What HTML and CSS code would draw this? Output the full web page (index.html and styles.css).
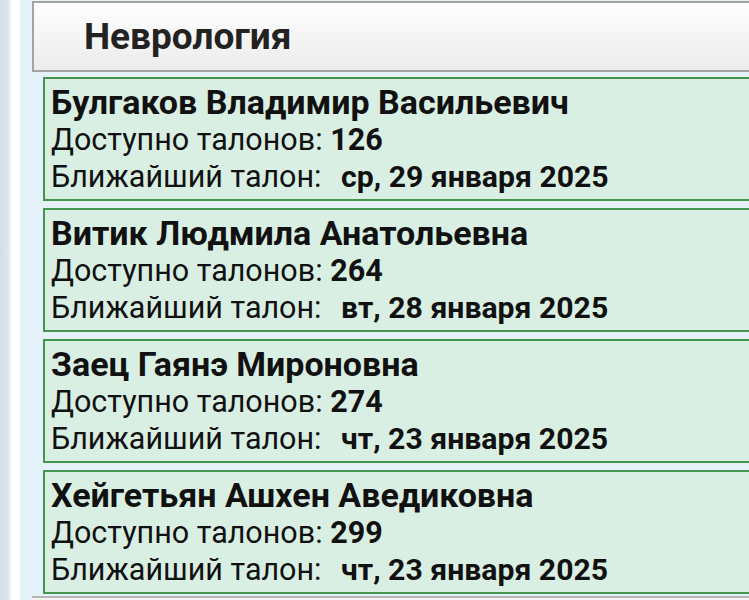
FILE: index.html
```html
<!DOCTYPE html>
<html lang="ru">
<head>
<meta charset="utf-8">
<link rel="stylesheet" href="styles.css">
</head>
<body>
<div class="page">
  <div class="rail"></div>
  <div class="content">
    <div class="header">Неврология</div>
    <div class="list">
      <div class="card">
        <div class="name">Булгаков Владимир Васильевич</div>
        <div class="line">Доступно талонов: <b>126</b></div>
        <div class="line">Ближайший талон: <b class="date">ср, 29 января 2025</b></div>
      </div>
      <div class="card">
        <div class="name">Витик Людмила Анатольевна</div>
        <div class="line">Доступно талонов: <b>264</b></div>
        <div class="line">Ближайший талон: <b class="date">вт, 28 января 2025</b></div>
      </div>
      <div class="card">
        <div class="name">Заец Гаянэ Мироновна</div>
        <div class="line">Доступно талонов: <b>274</b></div>
        <div class="line">Ближайший талон: <b class="date">чт, 23 января 2025</b></div>
      </div>
      <div class="card">
        <div class="name">Хейгетьян Ашхен Аведиковна</div>
        <div class="line">Доступно талонов: <b>299</b></div>
        <div class="line">Ближайший талон: <b class="date">чт, 23 января 2025</b></div>
      </div>
    </div>
    <div class="next"></div>
  </div>
</div>
</body>
</html>
```
FILE: styles.css
```css
html, body {
  margin: 0;
  padding: 0;
  height: 600px;
  overflow: hidden;
  background: #e6f2fa;
  font-family: Roboto, "Noto Sans", sans-serif;
  color: #111;
}
.page {
  display: flex;
  height: 600px;
}
.rail {
  width: 20px;
  flex: none;
  background: linear-gradient(to right, #d5dfe8 0, #dde6ee 8px, #ffffff 12px, #ffffff 20px);
}
.content {
  flex: 1;
  padding-left: 12px;
  margin-right: -20px;
  overflow: hidden;
}
.header {
  height: 67px;
  margin-top: 1px;
  border: 2px solid #a3a3a3;
  border-right: none;
  background: linear-gradient(#ffffff, #ebebeb);
  font-weight: bold;
  font-size: 37px;
  line-height: 67px;
  padding-left: 50px;
  color: #222;
}
.list {
  margin-top: 5px;
  margin-left: 11px;
  display: flex;
  flex-direction: column;
  gap: 7px;
}
.card {
  border: 2px solid #44954f;
  border-right: none;
  background: #d9efe3;
  padding: 4px 0 4px 6px;
  font-size: 30.5px;
  line-height: 37px;
}
.name {
  font-weight: bold;
  font-size: 34px;
  line-height: 38px;
}
.line b {
  font-weight: bold;
}
.date {
  margin-left: 12px;
  font-size: 30.2px;
}
.next {
  margin-top: 2px;
  height: 20px;
  border-top: 2px solid #b5b5b5;
  background: #f4f4f4;
}
```
